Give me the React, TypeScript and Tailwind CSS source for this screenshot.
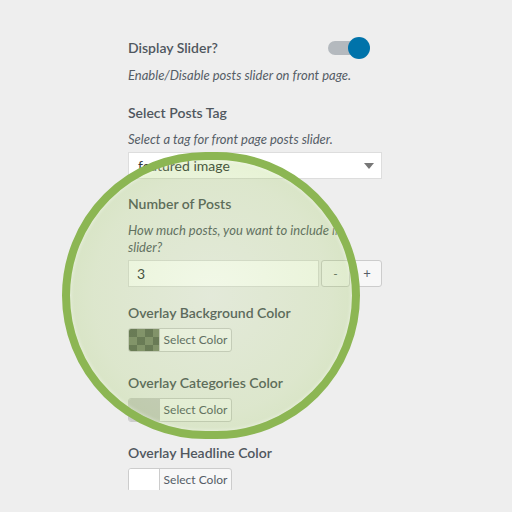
import React from 'react';

const Label: React.FC<{ children: React.ReactNode; className?: string }> = ({ children, className = '' }) => (
  <div className={`h-[24px] leading-[24px] text-[14px] font-semibold text-[#50575e] ${className}`}>{children}</div>
);

const Desc: React.FC<{ children: React.ReactNode; className?: string }> = ({ children, className = '' }) => (
  <div className={`text-[13px] italic leading-[17px] text-[#555d66] ${className}`}>{children}</div>
);

const ColorButton: React.FC<{ swatch: React.ReactNode }> = ({ swatch }) => (
  <div className="flex h-[24px] w-[104px] rounded-[3px] border border-[#cccccc] bg-[#f7f7f7] overflow-hidden">
    <div className="w-[31px] h-full border-r border-[#cccccc] overflow-hidden">{swatch}</div>
    <div className="flex-1 flex items-center justify-center text-[12px] text-[#555d66]">Select Color</div>
  </div>
);

const Checker: React.FC = () => {
  const cells = Array.from({ length: 12 }, (_, i) => (Math.floor(i / 4) + i) % 2 === 0);
  return (
    <div className="grid grid-cols-4 w-[32px] h-[24px]">
      {cells.map((dark, i) => (
        <div key={i} className={dark ? 'bg-[#5f6a58]' : 'bg-[#7d8870]'} />
      ))}
    </div>
  );
};

export default function App() {
  return (
    <div
      className="relative w-[512px] h-[512px] bg-[#eeeeee] overflow-hidden"
      style={{ fontFamily: '"Lato", "Noto Sans", sans-serif' }}
    >
      <div className="h-[490px] overflow-hidden">
        <div className="ml-[128px] w-[254px] pt-[36px]">
          <div className="flex items-center justify-between">
            <Label>Display Slider?</Label>
            <div className="relative w-[42px] h-[22px] mr-[12px] flex items-center">
              <div className="w-[36px] h-[14px] rounded-full bg-[#b4b9be]" />
              <div className="absolute right-0 top-0 w-[22px] h-[22px] rounded-full bg-[#0073aa]" />
            </div>
          </div>
          <Desc className="mt-[5px] leading-[20px]">Enable/Disable posts slider on front page.</Desc>

          <Label className="mt-[16px]">Select Posts Tag</Label>
          <Desc className="mt-[4px] leading-[20px]">Select a tag for front page posts slider.</Desc>
          <div className="mt-[3px] h-[27px] bg-white border border-[#dddddd] flex items-center justify-between pl-[9px] pr-[7px]">
            <span className="text-[14px] text-[#32373c]">featured image</span>
            <span className="w-0 h-0 border-l-[5px] border-r-[5px] border-t-[6px] border-l-transparent border-r-transparent border-t-[#777777]" />
          </div>

          <Label className="mt-[13px]">Number of Posts</Label>
          <Desc className="mt-[6px]">
            How much posts, you want to include in
            <br />
            slider?
          </Desc>
          <div className="mt-[4px] flex h-[27px] gap-[2px]">
            <div className="w-[191px] bg-white border border-[#dddddd] flex items-center pl-[8px] text-[14px] text-[#32373c]">3</div>
            <div className="w-[29px] rounded-[3px] border border-[#cccccc] bg-[#f7f7f7] flex items-center justify-center text-[12px] text-[#555d66]">-</div>
            <div className="w-[30px] rounded-[3px] border border-[#cccccc] bg-[#f7f7f7] flex items-center justify-center text-[13px] text-[#555d66]">+</div>
          </div>

          <Label className="mt-[14px]">Overlay Background Color</Label>
          <div className="mt-[3px]">
            <ColorButton swatch={<Checker />} />
          </div>

          <Label className="mt-[19px]">Overlay Categories Color</Label>
          <div className="mt-[3px]">
            <ColorButton swatch={<div className="w-full h-full bg-[#cccccc]" />} />
          </div>

          <Label className="mt-[19px]">Overlay Headline Color</Label>
          <div className="mt-[3px]">
            <ColorButton swatch={<div className="w-full h-full bg-white" />} />
          </div>
        </div>
      </div>

      {/* magnifier lens over the controls */}
      <div className="pointer-events-none absolute left-[62px] top-[152px] w-[298px] h-[287px] rounded-full border-[8px] border-[#8cb653] bg-[radial-gradient(circle_at_center,rgba(160,205,90,0.14)_0%,rgba(150,200,70,0.2)_60%,rgba(140,195,60,0.3)_100%)] shadow-[inset_0_0_4px_rgba(255,255,255,0.6)]" />
    </div>
  );
}
